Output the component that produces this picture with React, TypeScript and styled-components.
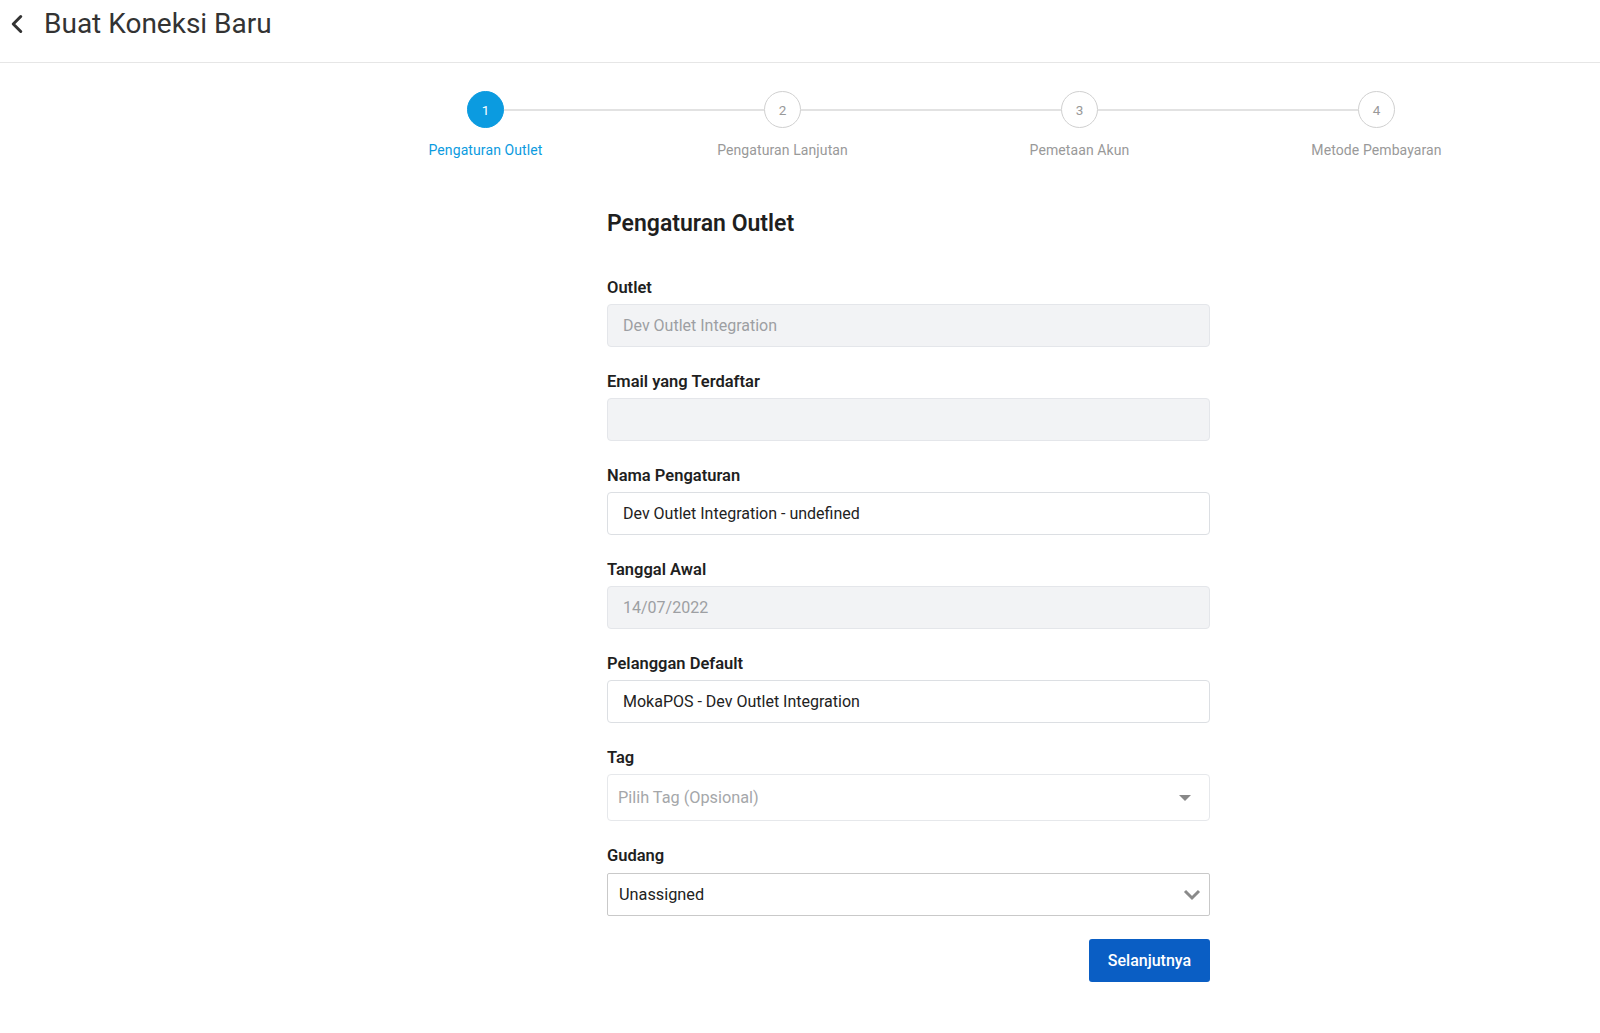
import React from 'react';
import styled, { createGlobalStyle } from 'styled-components';
import { ChevronLeft } from 'lucide-react';

const GlobalStyle = createGlobalStyle`
  body {
    margin: 0;
    background: #fff;
    font-family: Roboto, "Liberation Sans", Arial, sans-serif;
    color: #222;
  }
`;

const Header = styled.div`
  height: 63px;
  display: flex;
  align-items: flex-start;
  padding: 7px 0 0 0;
  border-bottom: 1px solid #e6e6e6;
  box-sizing: border-box;
`;

const BackButton = styled.button`
  border: none;
  background: none;
  padding: 0 0 0 2px;
  width: 40px;
  height: 34px;
  display: flex;
  align-items: center;
  color: #333;
  cursor: pointer;
`;

const Title = styled.h1`
  margin: 0 0 0 4px;
  font-size: 28px;
  line-height: 34px;
  font-weight: 400;
  color: #333;
`;

const Stepper = styled.div`
  display: flex;
  margin: 28px 0 0 337px;
`;

const Step = styled.div`
  width: 297px;
  display: flex;
  flex-direction: column;
  align-items: center;
`;

const Track = styled.div`
  width: 100%;
  display: flex;
  align-items: center;
`;

const HalfLine = styled.div<{ $hidden?: boolean }>`
  flex: 1;
  height: 2px;
  background: ${(p) => (p.$hidden ? 'transparent' : '#e2e2e2')};
`;

const Circle = styled.div<{ $active?: boolean }>`
  width: 37px;
  height: 37px;
  border-radius: 50%;
  box-sizing: border-box;
  display: flex;
  align-items: center;
  justify-content: center;
  font-size: 13.5px;
  color: ${(p) => (p.$active ? '#fff' : '#999')};
  background: ${(p) => (p.$active ? '#0b9be0' : '#fff')};
  border: 1px solid ${(p) => (p.$active ? '#0b9be0' : '#d0d0d0')};
`;

const StepLabel = styled.div<{ $active?: boolean }>`
  margin-top: 14px;
  font-size: 14px;
  line-height: 16px;
  letter-spacing: 0.1px;
  color: ${(p) => (p.$active ? '#0b9be0' : '#999')};
`;

const Form = styled.div`
  width: 603px;
  margin: 51px 0 0 607px;
  padding-bottom: 50px;
`;

const FormTitle = styled.h2`
  margin: 0 0 39px;
  font-size: 23px;
  line-height: 30px;
  font-weight: 600;
  color: #1f1f1f;
`;

const Field = styled.div`
  display: flex;
  flex-direction: column;
  margin-bottom: 25px;
`;

const Label = styled.label<{ $gap?: number }>`
  font-size: 16.5px;
  line-height: 20px;
  font-weight: 600;
  color: #1f1f1f;
  margin-bottom: ${(p) => p.$gap ?? 6}px;
`;

const Input = styled.div<{ $disabled?: boolean }>`
  height: 43px;
  box-sizing: border-box;
  border: 1px solid ${(p) => (p.$disabled ? '#e4e6ea' : '#dcdfe3')};
  border-radius: 4px;
  background: ${(p) => (p.$disabled ? '#f2f3f5' : '#fff')};
  padding: 0 15px;
  display: flex;
  align-items: center;
  font-size: 16px;
  color: ${(p) => (p.$disabled ? '#9d9fa3' : '#222')};
`;

const TagSelect = styled.div`
  height: 47px;
  box-sizing: border-box;
  border: 1px solid #e6e8eb;
  border-radius: 4px;
  padding: 0 18px 0 10px;
  display: flex;
  align-items: center;
  justify-content: space-between;
  font-size: 16.3px;
  color: #a5a7aa;
`;

const Caret = styled.span`
  width: 0;
  height: 0;
  border-left: 6px solid transparent;
  border-right: 6px solid transparent;
  border-top: 6px solid #888;
`;

const NativeSelect = styled.div`
  height: 43px;
  box-sizing: border-box;
  border: 1px solid #c9c9c9;
  border-radius: 2px;
  padding: 0 8px 0 11px;
  display: flex;
  align-items: center;
  justify-content: space-between;
  font-size: 16.3px;
  color: #222;
`;

const Actions = styled.div`
  display: flex;
  justify-content: flex-end;
  margin-top: -2px;
`;

const PrimaryButton = styled.button`
  width: 121px;
  height: 43px;
  border: none;
  border-radius: 3px;
  background: #0a5ec4;
  color: #fff;
  font-family: Roboto, "Liberation Sans", Arial, sans-serif;
  font-size: 16px;
  font-weight: 500;
  cursor: pointer;
`;

const steps = ['Pengaturan Outlet', 'Pengaturan Lanjutan', 'Pemetaan Akun', 'Metode Pembayaran'];

const fields = [
  { label: 'Outlet', value: 'Dev Outlet Integration', disabled: true },
  { label: 'Email yang Terdaftar', value: '', disabled: true },
  { label: 'Nama Pengaturan', value: 'Dev Outlet Integration - undefined', disabled: false },
  { label: 'Tanggal Awal', value: '14/07/2022', disabled: true },
  { label: 'Pelanggan Default', value: 'MokaPOS - Dev Outlet Integration', disabled: false },
];

const App = () => {
  return (
    <>
      <GlobalStyle />
      <Header>
        <BackButton>
          <ChevronLeft size={30} strokeWidth={2.4} />
        </BackButton>
        <Title>Buat Koneksi Baru</Title>
      </Header>

      <Stepper>
        {steps.map((s, i) => (
          <Step key={s}>
            <Track>
              <HalfLine $hidden={i === 0} />
              <Circle $active={i === 0}>{i + 1}</Circle>
              <HalfLine $hidden={i === steps.length - 1} />
            </Track>
            <StepLabel $active={i === 0}>{s}</StepLabel>
          </Step>
        ))}
      </Stepper>

      <Form>
        <FormTitle>Pengaturan Outlet</FormTitle>

        {fields.map((f) => (
          <Field key={f.label}>
            <Label>{f.label}</Label>
            <Input $disabled={f.disabled}>{f.value}</Input>
          </Field>
        ))}

        <Field>
          <Label>Tag</Label>
          <TagSelect>
            Pilih Tag (Opsional)
            <Caret />
          </TagSelect>
        </Field>

        <Field>
          <Label $gap={7}>Gudang</Label>
          <NativeSelect>
            Unassigned
            <svg width="18" height="12" viewBox="0 0 18 12">
              <path d="M2 2 L9 9 L16 2" fill="none" stroke="#8a8a8a" strokeWidth="3" />
            </svg>
          </NativeSelect>
        </Field>

        <Actions>
          <PrimaryButton>Selanjutnya</PrimaryButton>
        </Actions>
      </Form>
    </>
  );
};

export default App;
